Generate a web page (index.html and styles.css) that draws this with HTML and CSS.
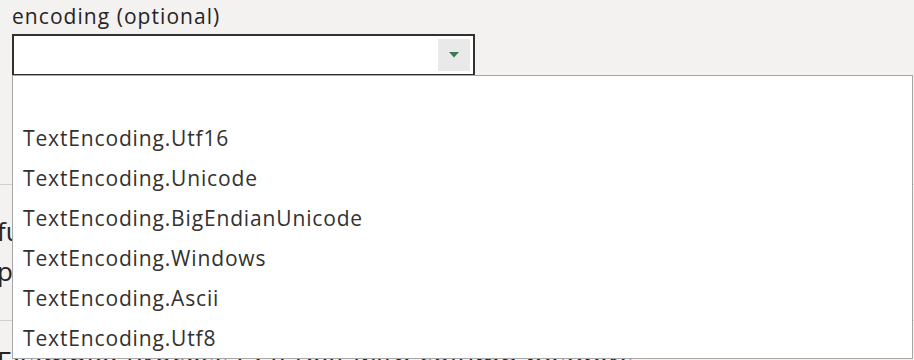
FILE: index.html
```html
<!DOCTYPE html>
<html>
<head>
<meta charset="utf-8">
<link rel="stylesheet" href="styles.css">
</head>
<body>
<div class="page">
  <div class="field">
    <label class="label">encoding (optional)</label>
    <div class="select">
      <div class="select-value"></div>
      <div class="select-btn">
        <svg width="10" height="6" viewBox="0 0 10 6"><path d="M0 0 H10 L5 5.5 Z" fill="#3b7a4e"/></svg>
      </div>
    </div>
  </div>
  <div class="behind">
    <div class="sep"></div>
    <div class="row row-a">function</div>
    <div class="row row-b">process</div>
    <div class="sep sep2"></div>
    <div class="example">Example: Process CSV text with column headers</div>
  </div>
  <ul class="dropdown">
    <li class="opt"></li>
    <li class="opt">TextEncoding.Utf16</li>
    <li class="opt">TextEncoding.Unicode</li>
    <li class="opt">TextEncoding.BigEndianUnicode</li>
    <li class="opt">TextEncoding.Windows</li>
    <li class="opt">TextEncoding.Ascii</li>
    <li class="opt">TextEncoding.Utf8</li>
  </ul>
</div>
</body>
</html>
```
FILE: styles.css
```css
html, body {
  margin: 0;
  padding: 0;
  background: #f3f2f1;
  overflow: hidden;
}
body {
  width: 914px;
  height: 360px;
  font-family: "Open Sans", "Noto Sans", sans-serif;
  color: #323130;
}
.page {
  position: relative;
  width: 914px;
  height: 360px;
  overflow: hidden;
}
.field {
  padding: 2px 0 0 12px;
}
.label {
  display: block;
  font-size: 21px;
  letter-spacing: 1.05px;
  line-height: 28px;
  color: #252423;
  margin-bottom: 4px;
}
.select {
  width: 456px;
  height: 38px;
  border: 2px solid #323130;
  background: #fff;
  display: flex;
  align-items: center;
  justify-content: flex-end;
  padding-right: 3px;
  box-sizing: content-box;
}
.select-btn {
  width: 32px;
  height: 32px;
  background: #e9e9e9;
  display: flex;
  align-items: center;
  justify-content: center;
}
.behind {
  padding-top: 108px;
}
.sep {
  height: 1px;
  background: #d2d0ce;
}
.row {
  font-size: 26px;
  line-height: 40px;
  text-indent: -3px;
  color: #252423;
}
.row-a { margin-top: 26px; }
.sep2 { margin-top: 29px; }
.example {
  margin-top: 24px;
  font-size: 27px;
  letter-spacing: 0.8px;
  line-height: 34px;
  text-indent: -3px;
  color: #252423;
  white-space: nowrap;
}
.dropdown {
  position: absolute;
  left: 12px;
  top: 75px;
  width: 899px;
  margin: 0;
  padding: 2px 0 0 0;
  list-style: none;
  background: #fff;
  border: 1px solid #a6a6a6;
  box-sizing: content-box;
}
.opt {
  height: 40px;
  line-height: 40px;
  padding-left: 10px;
  font-size: 21px;
  letter-spacing: 0.85px;
  color: #323130;
  white-space: nowrap;
}
```
